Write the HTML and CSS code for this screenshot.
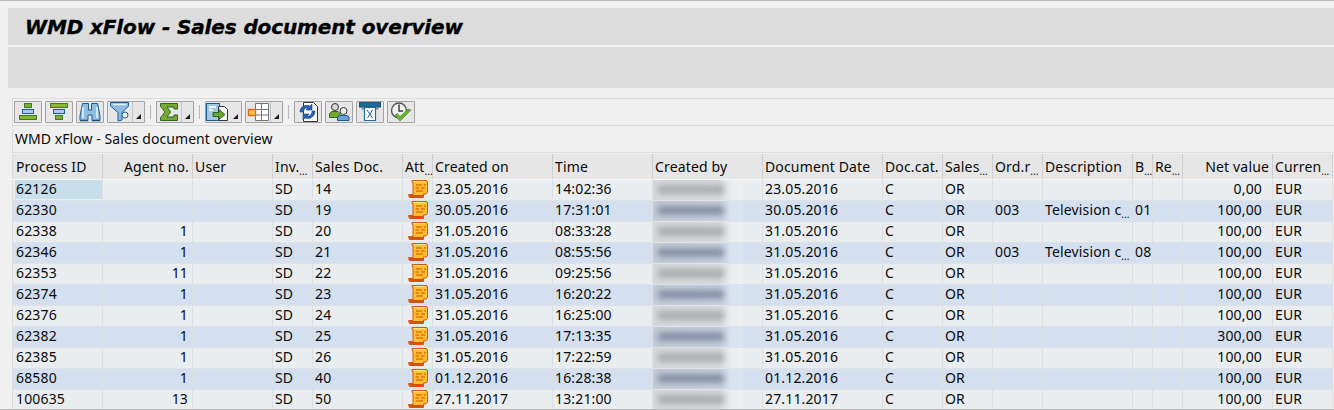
FILE: index.html
```html
<!DOCTYPE html>
<html lang="en">
<head>
<meta charset="utf-8">
<title>WMD xFlow - Sales document overview</title>
<link rel="stylesheet" href="styles.css">
</head>
<body>
<svg class="defs" width="0" height="0" aria-hidden="true">
  <symbol id="scroll" viewBox="0 0 20 18">
    <path d="M4 .5H18.5L19.5 2V12.5L18 14H15.5V17.5H1.5L.5 15.5V14.5H5V3L4 2Z" fill="#ffbe2e" stroke="#d4560f" stroke-width="1"/>
    <path d="M1 15H15V17.5H2Z" fill="#d4500e"/>
    <path d="M8 5H14M16 5H18M7.5 8H11M13 8H17M8 11H15" stroke="#e0740f" stroke-width="1.3"/>
    <path d="M6 1.6H17" stroke="#ffe89a" stroke-width="1"/>
  </symbol>
</svg>
<div class="app">
  <header class="title-band"><h1>WMD xFlow - Sales document overview</h1></header>
  <div class="app-band"></div>
  <div class="toolbar">
    <button class="tb"><svg width="20" height="20" viewBox="0 0 20 20"><rect x="6.5" y="1.5" width="7" height="4" fill="#7cb030" stroke="#3f7a2a"/><rect x="4.5" y="7.5" width="11" height="4" fill="#a9cbe8" stroke="#1c5f95"/><rect x="1.5" y="13.5" width="17" height="4" fill="#86b82f" stroke="#3f7a2a"/></svg></button>
    <button class="tb"><svg width="20" height="20" viewBox="0 0 20 20"><rect x="1.5" y="1.5" width="17" height="4" fill="#86b82f" stroke="#3f7a2a"/><rect x="4.5" y="7.5" width="11" height="4" fill="#a9cbe8" stroke="#1c5f95"/><rect x="6.5" y="13.5" width="7" height="4" fill="#7cb030" stroke="#3f7a2a"/></svg></button>
    <button class="tb"><svg width="22" height="20" viewBox="0 0 22 20"><path d="M3.5 1.5H9.5V8H12.5V1.5H18.5L21 14V18.5H13V13H9V18.5H1V14Z" fill="#93bde0" stroke="#1c5f95"/><path d="M4 5V16M18 5V16" stroke="#d4e6f5" stroke-width="2"/><path d="M1 18.5H9M13 18.5H21" stroke="#17527f" stroke-width="1.5"/></svg></button>
    <span class="tb split"><span class="tb-main"><svg width="20" height="20" viewBox="0 0 20 20"><path d="M0.5 0.5H18.5V4L12 10.5V18L8 19V10.5L0.5 4Z" fill="#8fbbdf" stroke="#1c5f95"/><path d="M3 2.5H16" stroke="#e0eef8" stroke-width="1.5"/><circle cx="15" cy="13" r="3" fill="#eef4f9" stroke="#1c5f95"/></svg></span><i class="arrow"></i></span>
    <span class="sep"></span>
    <span class="tb split"><span class="tb-main"><svg width="20" height="20" viewBox="0 0 20 20"><path d="M1.5 1.5H18.5V7H15V5H8L11.5 10L8 15H15V13H18.5V18.5H1.5V15.5L6 10L1.5 4.5Z" fill="#76a92c" stroke="#2f6a25"/></svg></span><i class="arrow"></i></span>
    <span class="sep"></span>
    <span class="tb split wide"><span class="tb-main"><svg width="26" height="20" viewBox="0 0 26 20"><rect x="0.5" y="1.5" width="13" height="17" fill="#a5c8e6" stroke="#1c5f95"/><path d="M3 5H10M3 8H7" stroke="#fff" stroke-width="1.5"/><path d="M12.5 4.5H18.5L21.5 7.5V18.5H12.5Z" fill="#f7f7f7" stroke="#333"/><path d="M7 10.5H13V7.5L19 12.5L13 17.5V14.5H7Z" fill="#66a82f" stroke="#2f6a25"/></svg></span><i class="arrow"></i></span>
    <span class="tb split"><span class="tb-main"><svg width="22" height="20" viewBox="0 0 22 20"><path d="M8.5 1.5H21.5V18.5H8.5Z" fill="#fff" stroke="#777"/><path d="M8.5 7.5H21.5M8.5 13H21.5M14.5 1.5V18.5" stroke="#777"/><rect x="1.5" y="7.5" width="7" height="6" fill="#ffc64a" stroke="#e2661b" stroke-width="1.4"/></svg></span><i class="arrow"></i></span>
    <span class="sep"></span>
    <button class="tb"><svg width="22" height="22" viewBox="0 0 22 22"><path d="M6.5 1.5H16.5L20.5 5.5V20.5H6.5Z" fill="#fafafa" stroke="#333"/><path d="M3 11C3 6 8 3 13 5L15 3V9H9L11 7C8 6.5 6.5 8.5 6.5 11Z" fill="#2e5fb0" stroke="#1b3f80" stroke-width=".6"/><path d="M18 10C18 16 12 19 8 17L6 19V13H12L10 15C13 15.5 15 13 15 10Z" fill="#2e5fb0" stroke="#1b3f80" stroke-width=".6"/></svg></button>
    <button class="tb"><svg width="22" height="20" viewBox="0 0 22 20"><circle cx="7" cy="5" r="3.5" fill="#d8d8d8" stroke="#333"/><path d="M1.5 15.5V11.5L4 9.5H10L12 11.5V15.5Z" fill="#73a82d" stroke="#2f6a25"/><circle cx="15.5" cy="9" r="3.5" fill="#eee" stroke="#333"/><path d="M9.5 18.5V15L12 13.5H19L21 15V18.5Z" fill="#6aa3d3" stroke="#1c5f95"/></svg></button>
    <button class="tb"><svg width="22" height="20" viewBox="0 0 22 20"><rect x="0.5" y="0.5" width="21" height="4.5" fill="#1f6b9c" stroke="#17527f"/><rect x="2.5" y="5" width="17" height="2.5" fill="#888"/><path d="M5.5 5.5H16.5V18.5H5.5Z" fill="#fff" stroke="#1f6b9c" stroke-width="1.2"/><path d="M8 8L13.5 16M13.5 8L8.5 16" stroke="#1f5c8a" stroke-width="1"/></svg></button>
    <button class="tb"><svg width="22" height="20" viewBox="0 0 22 20"><circle cx="9" cy="8.5" r="7.5" fill="#f4f4f4" stroke="#555" stroke-width="1.4"/><path d="M9 2.5V9H13" fill="none" stroke="#333" stroke-width="1.4"/><path d="M5 13L10 19L21 8L18 7L10 14.5L7.5 11.5Z" fill="#6ab52f" stroke="#3f7a2a" stroke-width=".6"/></svg></button>
  </div>
  <div class="list-title">WMD xFlow - Sales document overview</div>
  <table class="grid">
    <colgroup>
      <col class="w90"><col class="w90"><col class="w80"><col class="w40"><col class="w90"><col class="w30"><col class="w120"><col class="w100"><col class="w110"><col class="w120"><col class="w60"><col class="w50"><col class="w50"><col class="w90"><col class="w20"><col class="w30"><col class="w90"><col class="w60">
    </colgroup>
    <thead>
      <tr>
        <th class="first">Process ID</th><th class="r">Agent no.</th><th>User</th><th>Inv.<i class="more">...</i></th><th>Sales Doc.</th><th>Att<i class="more">...</i></th><th>Created on</th><th>Time</th><th>Created by</th><th>Document Date</th><th>Doc.cat.</th><th>Sales<i class="more">...</i></th><th>Ord.r<i class="more">...</i></th><th>Description</th><th>B<i class="more">...</i></th><th>Re<i class="more">...</i></th><th class="r">Net value</th><th>Curren<i class="more">...</i></th>
      </tr>
    </thead>
    <tbody id="rows"></tbody>
  </table>
</div>
<script src="rows.js"></script>
</body>
</html>
```

FILE: rows.js
```js
var data = [
  ["62126","","14","23.05.2016","14:02:36","23.05.2016","","","","0,00",1],
  ["62330","","19","30.05.2016","17:31:01","30.05.2016","003","Television c","01","100,00",2],
  ["62338","1","20","31.05.2016","08:33:28","31.05.2016","","","","100,00",1],
  ["62346","1","21","31.05.2016","08:55:56","31.05.2016","003","Television c","08","100,00",2],
  ["62353","11","22","31.05.2016","09:25:56","31.05.2016","","","","100,00",1],
  ["62374","1","23","31.05.2016","16:20:22","31.05.2016","","","","100,00",2],
  ["62376","1","24","31.05.2016","16:25:00","31.05.2016","","","","100,00",1],
  ["62382","1","25","31.05.2016","17:13:35","31.05.2016","","","","300,00",2],
  ["62385","1","26","31.05.2016","17:22:59","31.05.2016","","","","100,00",1],
  ["68580","1","40","01.12.2016","16:28:38","01.12.2016","","","","100,00",2],
  ["100635","13","50","27.11.2017","13:21:00","27.11.2017","","","","100,00",1]
];
var html = "";
data.forEach(function (d, i) {
  var first = i === 0 ? " sel" : "";
  var desc = d[7] ? d[7] + '<i class="more">...</i>' : "";
  var barClass = d[10] === 2 ? "bar dark" : "bar";
  html += '<tr class="' + (i % 2 ? "even" : "odd") + '">' +
    '<td class="first"><span class="idcell' + first + '">' + d[0] + "</span></td>" +
    '<td class="r">' + d[1] + "</td><td></td><td>SD</td><td>" + d[2] + "</td>" +
    '<td class="ic"><svg class="scroll" width="20" height="18"><use href="#scroll"/></svg></td>' +
    "<td>" + d[3] + "</td><td>" + d[4] + "</td>" +
    '<td class="blur"><span class="veil"><span class="' + barClass + '"></span></span></td>' +
    "<td>" + d[5] + "</td><td>C</td><td>OR</td><td>" + d[6] + "</td><td>" + desc + "</td><td>" + d[8] + "</td><td></td>" +
    '<td class="r val">' + d[9] + "</td><td>EUR</td></tr>";
});
document.getElementById("rows").innerHTML = html;
```

FILE: styles.css
```css
* { box-sizing: border-box; }
html, body { margin: 0; padding: 0; }
body { width: 1334px; height: 410px; overflow: hidden; background: #f0f0f0; font-family: "Noto Sans", "DejaVu Sans", sans-serif; font-size: 14px; letter-spacing: 0.15px; color: #0a0a0a; }
.defs { position: absolute; }
.app { height: 410px; border-top: 1px solid #b8b8b8; border-bottom: 1px solid #b8b8b8; padding-top: 7px; overflow: hidden; }
.title-band { margin-left: 8px; height: 37px; background: #dcdcdc; display: flex; align-items: center; padding-left: 17px; }
h1 { margin: 0; font-family: "DejaVu Sans", sans-serif; font-size: 20px; font-weight: bold; font-style: italic; letter-spacing: -0.12px; -webkit-text-stroke: 0.35px #000; color: #000; white-space: nowrap; }
.app-band { margin: 2px 0 10px 8px; height: 41px; background: #dcdcdc; }
.toolbar { margin-left: 12px; height: 28px; border-top: 1px solid #dcdcdc; border-bottom: 1px solid #dcdcdc; border-left: 1px solid #dcdcdc; display: flex; align-items: flex-start; padding: 2px 0 0 1px; gap: 3px; }
.tb { width: 28px; height: 22px; padding: 0; border: 1px solid #a3a3a3; border-radius: 1px; background: #e6e6e6; display: flex; align-items: center; justify-content: center; flex: none; }
.split { width: 38px; }
.wide { width: 37px; }
.tb-main { flex: 1; height: 100%; display: flex; align-items: center; justify-content: center; }
.arrow { width: 12px; height: 100%; flex: none; border-left: 1px solid #c4c4c4; position: relative; }
.split.wide .arrow { border-left: none; width: 9px; }
.arrow::after { content: ""; position: absolute; right: 3px; bottom: 3px; border-style: solid; border-width: 0 0 5px 5px; border-color: transparent transparent #1a1a1a transparent; }
.sep { width: 1px; height: 14px; margin: 4px 2px 0; background: #b4b4b4; flex: none; }
.list-title { margin-left: 12px; height: 27px; border-left: 1px solid #dcdcdc; border-bottom: 1px solid #dcdcdc; padding-left: 2px; line-height: 25px; letter-spacing: 0.06px; }
.grid { margin: 1px 0 0 12px; width: 1320px; table-layout: fixed; border-collapse: collapse; }
.w20 { width: 20px; } .w30 { width: 30px; } .w40 { width: 40px; } .w50 { width: 50px; } .w60 { width: 60px; } .w80 { width: 80px; } .w90 { width: 90px; } .w100 { width: 100px; } .w110 { width: 110px; } .w120 { width: 120px; }
th, td { padding: 0 0 0 2px; text-align: left; font-weight: normal; white-space: nowrap; overflow: hidden; border-right: 1px solid #dcdfe2; }
th { height: 25px; line-height: 19px; padding-top: 1px; background: #e6e6e6; border-right-color: #cfcfcf; border-bottom: 1px solid #f4f4f4; }
td { height: 21px; line-height: 18px; padding-bottom: 2px; border-bottom: 1px solid #dfe3e7; }
.odd td { background: #e9edf0; }
.even td { background: #d4e0f0; }
th:first-child, td:first-child { border-left: 1px solid #dcdcdc; }
th.first { padding-left: 3px; }
td.first { padding: 0 0 1px 2px; }
.r { text-align: right; padding-right: 3px; }
td.r { padding-right: 4px; }
td.val { padding-right: 10px; }
.idcell { display: block; padding-left: 1px; height: 19px; line-height: 18px; }
.sel { background: #c6dfeb; }
.more { font-style: normal; font-size: 10px; line-height: 0; letter-spacing: 0; vertical-align: -3px; }
td.ic { padding: 0 0 1px 5px; }
.scroll { display: block; }
td.blur { padding: 0; }
.veil { display: block; height: 20px; width: 90px; padding: 5px 0 0 5px; }
.odd .veil { background: linear-gradient(90deg, #d6d9dc 0, #d8dbde 74%, #eaedef 86%, #edeff1 100%); }
.even .veil { background: linear-gradient(90deg, #c6ccd8 0, #c8d0de 74%, #d8e2ef 86%, #dce5f1 100%); }
.bar { display: block; width: 66px; height: 9px; background: #a9abae; filter: blur(3px); }
.bar.dark { background: #858fa5; }
```
